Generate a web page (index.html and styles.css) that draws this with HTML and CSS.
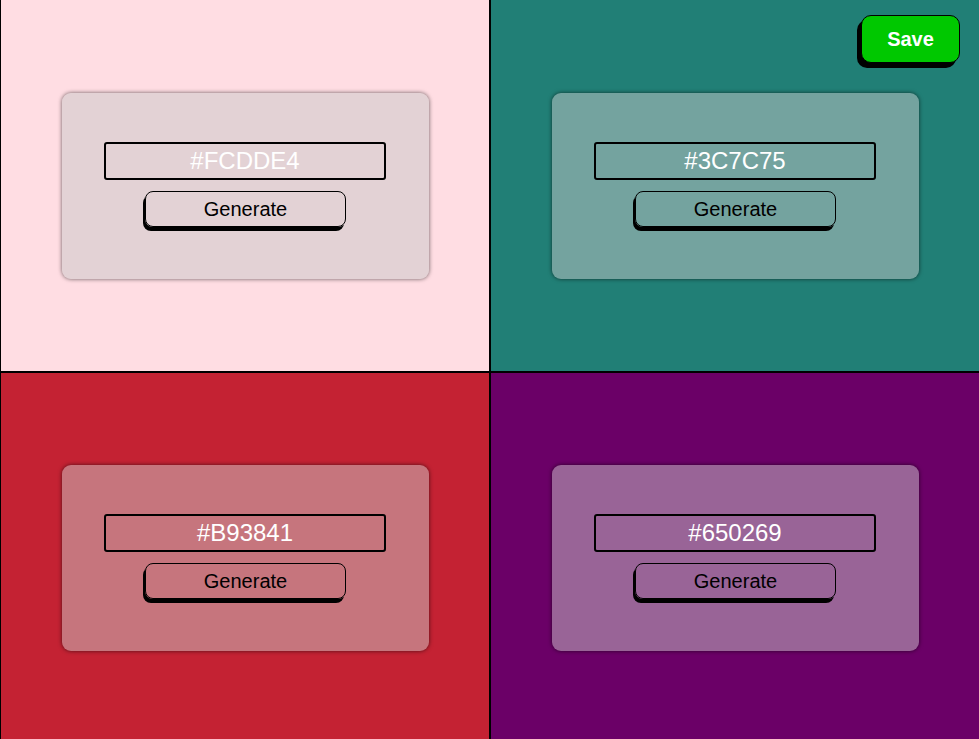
FILE: index.html
```html
<!DOCTYPE html>
<html>
<head>
<meta charset="utf-8">
<link rel="stylesheet" href="styles.css">
</head>
<body>
<div class="grid">
  <section class="cell cell-pink">
    <div class="card">
      <div class="hex">#FCDDE4</div>
      <button class="gen">Generate</button>
    </div>
  </section>
  <section class="cell cell-teal">
    <div class="card">
      <div class="hex">#3C7C75</div>
      <button class="gen">Generate</button>
    </div>
  </section>
  <section class="cell cell-red">
    <div class="card">
      <div class="hex">#B93841</div>
      <button class="gen">Generate</button>
    </div>
  </section>
  <section class="cell cell-purple">
    <div class="card">
      <div class="hex">#650269</div>
      <button class="gen">Generate</button>
    </div>
  </section>
</div>
<button class="save">Save</button>
</body>
</html>
```
FILE: styles.css
```css
html, body {
  margin: 0;
  padding: 0;
  overflow: hidden;
  height: 739px;
  font-family: "Liberation Sans", Arial, sans-serif;
}
.grid {
  display: grid;
  grid-template-columns: 488px 488px;
  grid-template-rows: 371px 369px;
  gap: 2px;
  background: #000;
  border-left: 1px solid #000;
  width: 978px;
}
.cell {
  display: flex;
  align-items: center;
  justify-content: center;
}
.cell-pink { background: #ffdde3; }
.cell-teal { background: #217f76; }
.cell-red { background: #c42233; }
.cell-purple { background: #6b0067; }
.card {
  width: 367px;
  height: 186px;
  box-sizing: border-box;
  border-radius: 9px;
  background: rgba(200, 200, 200, 0.5);
  box-shadow: 0 0 4px rgba(0, 0, 0, 0.6);
  display: flex;
  flex-direction: column;
  align-items: center;
  justify-content: center;
  gap: 11px;
  padding-bottom: 2px;
}
.hex {
  width: 282px;
  height: 38px;
  box-sizing: border-box;
  border: 2px solid #000;
  border-radius: 3px;
  color: #fff;
  font-size: 24px;
  line-height: 34px;
  text-align: center;
}
.gen {
  width: 201px;
  height: 36px;
  box-sizing: border-box;
  border: 1px solid #000;
  border-radius: 8px;
  background: transparent;
  box-shadow: -2px 4px 0 #000;
  font-family: "Liberation Sans", Arial, sans-serif;
  font-size: 20px;
  color: #000;
  padding: 0;
  margin-left: 1px;
}
.save {
  position: absolute;
  top: 15px;
  left: 861px;
  width: 99px;
  height: 48px;
  box-sizing: border-box;
  border: 1px solid #000;
  border-radius: 10px;
  background: #00c800;
  box-shadow: -4px 5px 0 #000;
  color: #fff;
  font-family: "Liberation Sans", Arial, sans-serif;
  font-weight: bold;
  font-size: 20px;
  padding: 0;
}
```
